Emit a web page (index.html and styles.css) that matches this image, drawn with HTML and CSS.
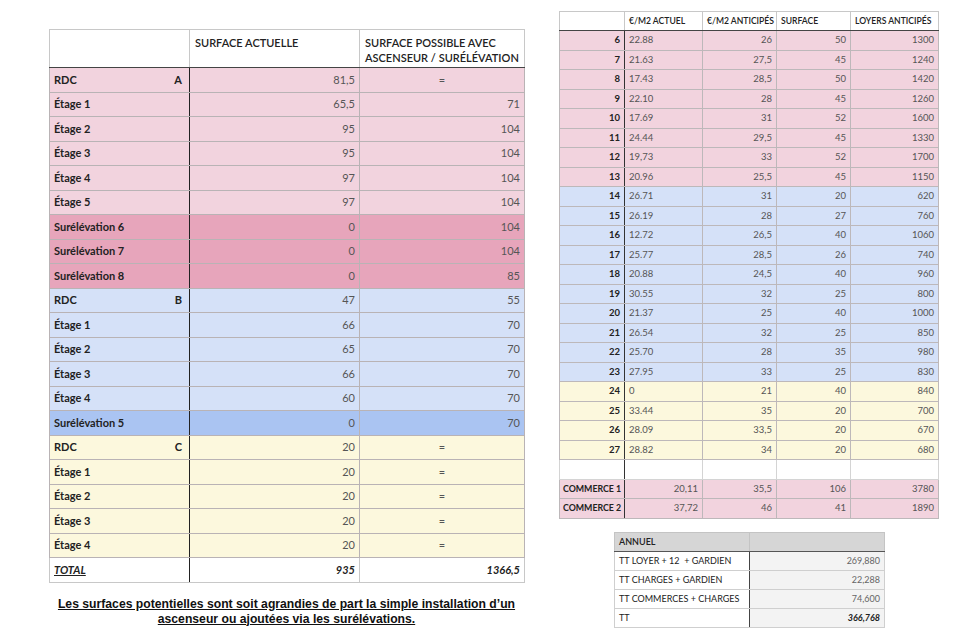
FILE: index.html
```html
<!DOCTYPE html>
<html lang="fr">
<head>
<meta charset="utf-8">
<title>Surfaces et loyers</title>
<link rel="stylesheet" href="styles.css">
</head>
<body>
<div class="page">
  <div class="left-col">
    <table class="surf">
      <colgroup><col class="c1"><col class="c2"><col class="c3"></colgroup>
      <thead>
        <tr><th></th><th>SURFACE ACTUELLE</th><th>SURFACE POSSIBLE AVEC ASCENSEUR / SURÉLÉVATION</th></tr>
      </thead>
      <tbody>
        <tr class="pink"><td class="lab"><span class="rdc"><span>RDC</span><span>A</span></span></td><td class="num">81,5</td><td class="eq">=</td></tr>
        <tr class="pink"><td class="lab">Étage 1</td><td class="num">65,5</td><td class="num">71</td></tr>
        <tr class="pink"><td class="lab">Étage 2</td><td class="num">95</td><td class="num">104</td></tr>
        <tr class="pink"><td class="lab">Étage 3</td><td class="num">95</td><td class="num">104</td></tr>
        <tr class="pink"><td class="lab">Étage 4</td><td class="num">97</td><td class="num">104</td></tr>
        <tr class="pink"><td class="lab">Étage 5</td><td class="num">97</td><td class="num">104</td></tr>
        <tr class="dpink"><td class="lab">Surélévation 6</td><td class="num">0</td><td class="num">104</td></tr>
        <tr class="dpink"><td class="lab">Surélévation 7</td><td class="num">0</td><td class="num">104</td></tr>
        <tr class="dpink"><td class="lab">Surélévation 8</td><td class="num">0</td><td class="num">85</td></tr>
        <tr class="blue"><td class="lab"><span class="rdc"><span>RDC</span><span>B</span></span></td><td class="num">47</td><td class="num">55</td></tr>
        <tr class="blue"><td class="lab">Étage 1</td><td class="num">66</td><td class="num">70</td></tr>
        <tr class="blue"><td class="lab">Étage 2</td><td class="num">65</td><td class="num">70</td></tr>
        <tr class="blue"><td class="lab">Étage 3</td><td class="num">66</td><td class="num">70</td></tr>
        <tr class="blue"><td class="lab">Étage 4</td><td class="num">60</td><td class="num">70</td></tr>
        <tr class="dblue"><td class="lab">Surélévation 5</td><td class="num">0</td><td class="num">70</td></tr>
        <tr class="yellow"><td class="lab"><span class="rdc"><span>RDC</span><span>C</span></span></td><td class="num">20</td><td class="eq">=</td></tr>
        <tr class="yellow"><td class="lab">Étage 1</td><td class="num">20</td><td class="eq">=</td></tr>
        <tr class="yellow"><td class="lab">Étage 2</td><td class="num">20</td><td class="eq">=</td></tr>
        <tr class="yellow"><td class="lab">Étage 3</td><td class="num">20</td><td class="eq">=</td></tr>
        <tr class="yellow"><td class="lab">Étage 4</td><td class="num">20</td><td class="eq">=</td></tr>
        <tr class="total"><td class="lab"><u>TOTAL</u></td><td class="num">935</td><td class="num">1366,5</td></tr>
      </tbody>
    </table>
    <p class="note">Les surfaces potentielles sont soit agrandies de part la simple installation d’un ascenseur ou ajoutées via les surélévations.</p>
  </div>

  <div class="right-col">
    <table class="loyers">
      <colgroup><col class="r1"><col class="r2"><col class="r3"><col class="r4"><col class="r5"></colgroup>
      <thead>
        <tr><th></th><th>€/M2 ACTUEL</th><th>€/M2 ANTICIPÉS</th><th>SURFACE</th><th>LOYERS ANTICIPÉS</th></tr>
      </thead>
      <tbody>
        <tr class="pink"><td class="id">6</td><td>22.88</td><td class="num">26</td><td class="num">50</td><td class="num">1300</td></tr>
        <tr class="pink"><td class="id">7</td><td>21.63</td><td class="num">27,5</td><td class="num">45</td><td class="num">1240</td></tr>
        <tr class="pink"><td class="id">8</td><td>17.43</td><td class="num">28,5</td><td class="num">50</td><td class="num">1420</td></tr>
        <tr class="pink"><td class="id">9</td><td>22.10</td><td class="num">28</td><td class="num">45</td><td class="num">1260</td></tr>
        <tr class="pink"><td class="id">10</td><td>17.69</td><td class="num">31</td><td class="num">52</td><td class="num">1600</td></tr>
        <tr class="pink"><td class="id">11</td><td>24.44</td><td class="num">29,5</td><td class="num">45</td><td class="num">1330</td></tr>
        <tr class="pink"><td class="id">12</td><td>19,73</td><td class="num">33</td><td class="num">52</td><td class="num">1700</td></tr>
        <tr class="pink"><td class="id">13</td><td>20.96</td><td class="num">25,5</td><td class="num">45</td><td class="num">1150</td></tr>
        <tr class="blue"><td class="id">14</td><td>26.71</td><td class="num">31</td><td class="num">20</td><td class="num">620</td></tr>
        <tr class="blue"><td class="id">15</td><td>26.19</td><td class="num">28</td><td class="num">27</td><td class="num">760</td></tr>
        <tr class="blue"><td class="id">16</td><td>12.72</td><td class="num">26,5</td><td class="num">40</td><td class="num">1060</td></tr>
        <tr class="blue"><td class="id">17</td><td>25.77</td><td class="num">28,5</td><td class="num">26</td><td class="num">740</td></tr>
        <tr class="blue"><td class="id">18</td><td>20.88</td><td class="num">24,5</td><td class="num">40</td><td class="num">960</td></tr>
        <tr class="blue"><td class="id">19</td><td>30.55</td><td class="num">32</td><td class="num">25</td><td class="num">800</td></tr>
        <tr class="blue"><td class="id">20</td><td>21.37</td><td class="num">25</td><td class="num">40</td><td class="num">1000</td></tr>
        <tr class="blue"><td class="id">21</td><td>26.54</td><td class="num">32</td><td class="num">25</td><td class="num">850</td></tr>
        <tr class="blue"><td class="id">22</td><td>25.70</td><td class="num">28</td><td class="num">35</td><td class="num">980</td></tr>
        <tr class="blue"><td class="id">23</td><td>27.95</td><td class="num">33</td><td class="num">25</td><td class="num">830</td></tr>
        <tr class="yellow"><td class="id">24</td><td>0</td><td class="num">21</td><td class="num">40</td><td class="num">840</td></tr>
        <tr class="yellow"><td class="id">25</td><td>33.44</td><td class="num">35</td><td class="num">20</td><td class="num">700</td></tr>
        <tr class="yellow"><td class="id">26</td><td>28.09</td><td class="num">33,5</td><td class="num">20</td><td class="num">670</td></tr>
        <tr class="yellow"><td class="id">27</td><td>28.82</td><td class="num">34</td><td class="num">20</td><td class="num">680</td></tr>
        <tr class="blank"><td></td><td></td><td></td><td></td><td></td></tr>
        <tr class="pink"><td class="com">COMMERCE 1</td><td class="num">20,11</td><td class="num">35,5</td><td class="num">106</td><td class="num">3780</td></tr>
        <tr class="pink"><td class="com">COMMERCE 2</td><td class="num">37,72</td><td class="num">46</td><td class="num">41</td><td class="num">1890</td></tr>
      </tbody>
    </table>

    <table class="annuel">
      <colgroup><col class="a1"><col class="a2"></colgroup>
      <thead>
        <tr><th>ANNUEL</th><th></th></tr>
      </thead>
      <tbody>
        <tr><td>TT LOYER + 12 &nbsp;+ GARDIEN</td><td class="num">269,880</td></tr>
        <tr><td>TT CHARGES + GARDIEN</td><td class="num">22,288</td></tr>
        <tr><td>TT COMMERCES + CHARGES</td><td class="num">74,600</td></tr>
        <tr class="tt"><td>TT</td><td class="num">366,768</td></tr>
      </tbody>
    </table>
  </div>
</div>
</body>
</html>
```

FILE: styles.css
```css
* { box-sizing: border-box; }

html, body {
  margin: 0;
  padding: 0;
  background: #ffffff;
}

body {
  font-family: Lato, "Open Sans", "Noto Sans", sans-serif;
  color: #222;
}

.page {
  display: flex;
  align-items: flex-start;
  padding-left: 49px;
}

/* ---------- left table ---------- */
.left-col {
  margin-top: 29px;
  width: 475px;
}

table {
  border-collapse: collapse;
  table-layout: fixed;
}

.surf {
  width: 475px;
  font-size: 11px;
}

.surf .c1 { width: 140px; }
.surf .c2 { width: 170px; }
.surf .c3 { width: 165px; }

.surf th {
  height: 38px;
  padding: 5px 5px 0 5px;
  text-align: left;
  vertical-align: top;
  font-weight: 600;
  line-height: 15px;
  color: #222;
  background: #fff;
  border: 1px solid #c8c8c8;
  border-bottom: 1px solid #444;
}

.surf td {
  height: 24.5px;
  padding: 0 4px 0 4px;
  border: 1px solid #b9b3b5;
  color: #555;
  line-height: 14px;
}

.surf td:first-child {
  border-right: 1.5px solid #222;
}

.surf td.lab {
  font-weight: 700;
  color: #222;
}

.surf .rdc {
  display: flex;
  justify-content: space-between;
  padding-right: 3px;
}

.num { text-align: right; }
.eq { text-align: center; }

.pink td { background: #f2d3de; }
.dpink td { background: #e7a5bb; }
.blue td { background: #d5e1f8; }
.dblue td { background: #aac4f2; }
.yellow td { background: #fcf8dd; }

.surf .total td {
  background: #fff;
  font-weight: 700;
  font-style: italic;
  color: #222;
  border-color: #c8c8c8;
}

.surf .total td:first-child {
  border-right: 1.5px solid #222;
}

.note {
  margin: 14px 0 0 0;
  text-align: center;
  font-family: "Liberation Sans", Arial, sans-serif;
  font-weight: 700;
  font-size: 12.2px;
  line-height: 15px;
  text-decoration: underline;
  color: #111;
  padding: 0;
}

/* ---------- right table ---------- */
.right-col {
  margin-left: 35px;
  margin-top: 11px;
  display: flex;
  flex-direction: column;
}

.loyers {
  width: 379px;
  font-size: 9.5px;
}

.loyers .r1 { width: 65px; }
.loyers .r2 { width: 78px; }
.loyers .r3 { width: 74px; }
.loyers .r4 { width: 74px; }
.loyers .r5 { width: 88px; }

.loyers th {
  height: 19px;
  padding: 0 3px 0 4px;
  text-align: left;
  font-weight: 600;
  font-size: 8.6px;
  white-space: nowrap;
  overflow: hidden;
  color: #222;
  background: #fff;
  border: 1px solid #c8c8c8;
  border-bottom: 1px solid #444;
}

.loyers td {
  height: 19.5px;
  padding: 0 4px;
  border: 1px solid #bdb8ba;
  color: #555;
  line-height: 12px;
  white-space: nowrap;
}

.loyers td:first-child {
  border-right: 1.5px solid #333;
}

.loyers td.id {
  text-align: right;
  font-weight: 700;
  color: #222;
}

.loyers td.com {
  font-weight: 700;
  font-size: 8.8px;
  color: #222;
  padding: 0 3px;
}

.loyers .blank td {
  background: #fff;
  border-color: #d4d4d4;
}

.loyers .blank td:first-child {
  border-right: 1.5px solid #333;
}

/* ---------- annual table ---------- */
.annuel {
  width: 270px;
  margin: 13px 0 0 55px;
  font-size: 9px;
}

.annuel .a1 { width: 135px; }
.annuel .a2 { width: 135px; }

.annuel th {
  height: 19px;
  padding: 0 4px;
  text-align: left;
  font-weight: 600;
  color: #222;
  background: #d6d6d6;
  border: 1px solid #c4c4c4;
  border-bottom: 1.5px solid #555;
}

.annuel td {
  height: 19px;
  padding: 0 4px;
  border: 1px solid #cfcfcf;
  color: #222;
  background: #fff;
  white-space: nowrap;
}

.annuel td:first-child {
  border-right: 1.5px solid #444;
}

.annuel td.num {
  background: #f3f3f3;
  color: #666;
}

.annuel .tt td.num {
  font-weight: 700;
  font-style: italic;
  color: #222;
}
```
